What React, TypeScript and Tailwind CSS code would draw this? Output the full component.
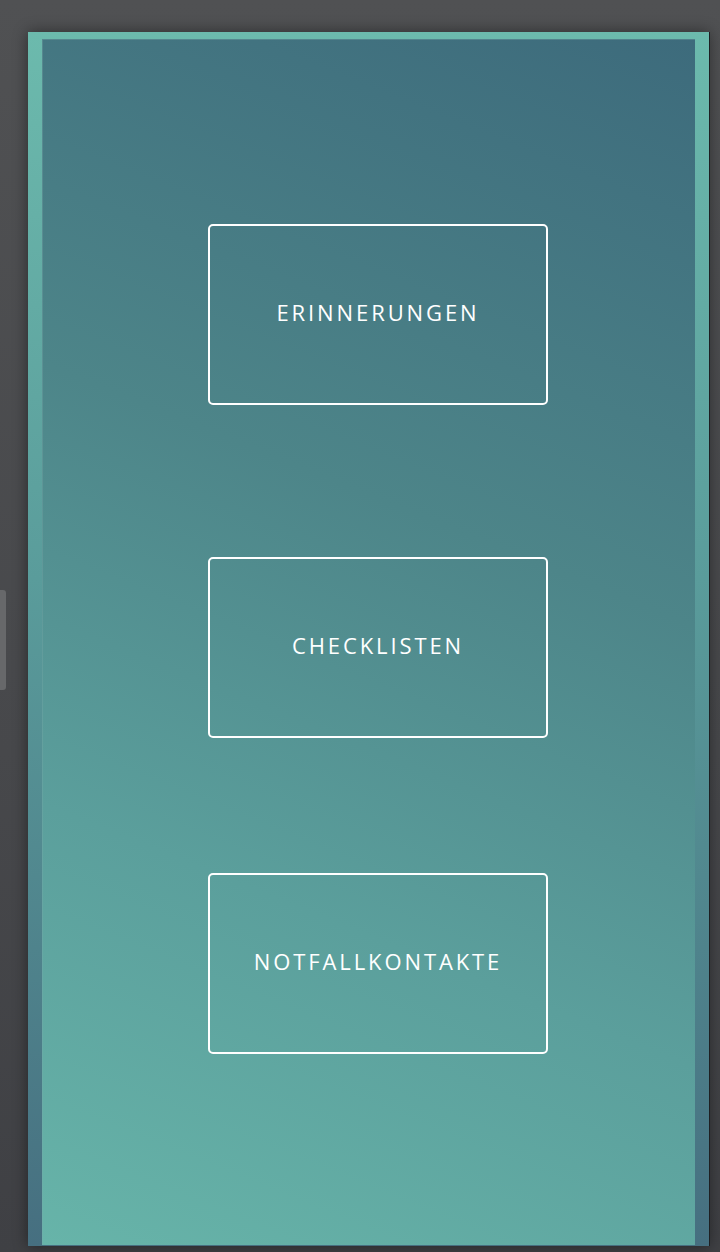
import React from "react";

const items = ["ERINNERUNGEN", "CHECKLISTEN", "NOTFALLKONTAKTE"];

function Tile({ label, className }: { label: string; className: string }) {
  return (
    <div
      className={`ml-[166px] flex h-[181px] w-[340px] items-center justify-center rounded-[5px] border-2 border-white ${className}`}
    >
      <span className="-mt-[6px] text-[22px] font-medium leading-none tracking-[2.9px] text-white [font-family:'Open_Sans',sans-serif]">
        {label}
      </span>
    </div>
  );
}

export default function App() {
  return (
    <div className="relative h-[1252px] w-[720px] overflow-hidden bg-[linear-gradient(180deg,#505153_0%,#47484b_60%,#3f4044_100%)]">
      <div className="absolute left-0 top-[590px] h-[100px] w-[6px] rounded-r-[3px] bg-[#67686a]" />
      <div className="pl-[28px] pt-[32px]">
        <div className="h-[1214px] w-[681px] border-b border-l-[14px] border-r-[14px] border-t-[7px] border-transparent bg-[linear-gradient(180deg,#6cbaad_0%,#5a9c9b_45%,#466f80_100%)] [background-origin:border-box] shadow-[1px_0_0_#1e1f22,0_0_14px_rgba(0,0,0,0.45)]">
          <div className="flex h-full flex-col bg-[linear-gradient(202deg,#3d6b7c_0%,#4d8589_40%,#5b9f9c_70%,#67b4a9_100%)] pt-[185px] shadow-[inset_1px_1px_0_rgba(120,170,170,0.35)]">
            <Tile label={items[0]} className="" />
            <Tile label={items[1]} className="mt-[152px]" />
            <Tile label={items[2]} className="mt-[135px]" />
          </div>
        </div>
      </div>
    </div>
  );
}
